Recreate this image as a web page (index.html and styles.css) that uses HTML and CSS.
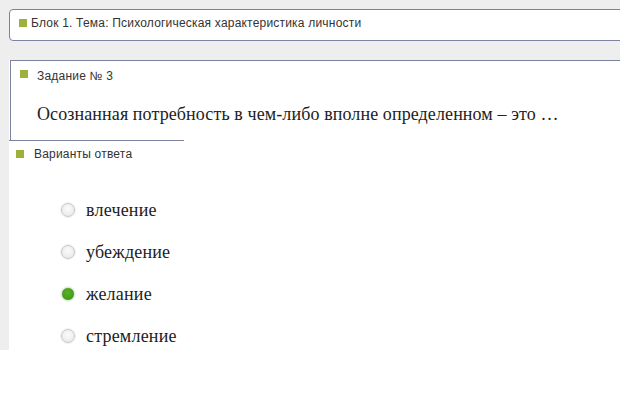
FILE: index.html
```html
<!DOCTYPE html>
<html>
  <head>
    <meta charset="utf-8">
    <title>Задание № 3</title>
    <link rel="stylesheet" href="styles.css">
  </head>
  <body>
    <main class="page">
      <header class="block-title">
        <span class="mark"></span>Блок 1. Тема: Психологическая характеристика личности
      </header>

      <section class="sheet">
        <div class="task">
          <div class="task-head"><span class="mark"></span>Задание № 3</div>
          <p class="question">Осознанная потребность в чем-либо вполне определенном – это …</p>
        </div>
        <div class="tab-line"></div>

        <div class="answers-head"><span class="mark"></span>Варианты ответа</div>
        <ul class="options">
          <li><label><input type="radio" name="answer"> влечение</label></li>
          <li><label><input type="radio" name="answer"> убеждение</label></li>
          <li><label><input type="radio" name="answer" checked> желание</label></li>
          <li><label><input type="radio" name="answer"> стремление</label></li>
        </ul>
      </section>
    </main>
  </body>
</html>
```

FILE: styles.css
```css
body {
  margin: 0;
  background-color: #fff;
  font-family: "Liberation Sans", Arial, sans-serif;
  color: #333;
}

.page {
  display: flex;
  flex-direction: column;
  box-sizing: border-box;
  height: 350px;
  padding: 9px 0 0 9px;
  background-color: #eeeeee;
  overflow: hidden;
}

.mark {
  display: inline-block;
  width: 8px;
  height: 8px;
  background-color: #9db13c;
}

.block-title {
  flex-shrink: 0;
  box-sizing: border-box;
  height: 32px;
  margin-right: -10px;
  padding: 6px 0 0 9px;
  border: 1px solid #7d82a3;
  border-radius: 4px;
  background-color: #fff;
  font-size: 12px;
  line-height: 14px;
  letter-spacing: 0.2px;
}

.block-title .mark {
  margin-right: 4px;
}

.sheet {
  flex: 1;
  min-height: 0;
  margin-top: 19px;
  background-color: #fff;
}

.task {
  box-sizing: border-box;
  height: 80px;
  margin-left: 1px;
  padding: 8px 0 0 9px;
  border-top: 1px solid #7d82a3;
  border-left: 1px solid #7d82a3;
}

.task-head,
.answers-head {
  font-size: 12px;
  line-height: 14px;
  letter-spacing: 0.2px;
}

.task-head .mark {
  margin-right: 9px;
  margin-bottom: 2px;
}

.question {
  margin: 20px 0 0 17px;
  font-family: "Liberation Serif", "Times New Roman", serif;
  font-size: 18px;
  line-height: 22px;
  letter-spacing: 0.1px;
  color: #222;
}

.tab-line {
  width: 175px;
  border-top: 1px solid #7d82a3;
}

.answers-head {
  padding: 6px 0 0 7px;
}

.answers-head .mark {
  margin-right: 10px;
}

.options {
  list-style: none;
  margin: 28px 0 0;
  padding: 0 0 0 52px;
  font-family: "Liberation Serif", "Times New Roman", serif;
  font-size: 18px;
  letter-spacing: 0.2px;
  color: #222;
}

.options li {
  height: 42px;
  display: flex;
  align-items: center;
}

.options label {
  display: flex;
  align-items: center;
  gap: 11px;
}

.options input {
  appearance: none;
  width: 14px;
  height: 14px;
  margin: 0;
  border: 1px solid #c9c9c9;
  border-radius: 50%;
  background: radial-gradient(circle at 50% 40%, #fbfbfb 0, #ececec 70%, #dcdcdc 100%);
  box-shadow: 0 0 0 1px #f2f2f2;
}

.options input:checked {
  border-color: #d8e8cf;
  background: radial-gradient(circle at 45% 40%, #5cb02a 0, #3f9714 80%);
}
```
